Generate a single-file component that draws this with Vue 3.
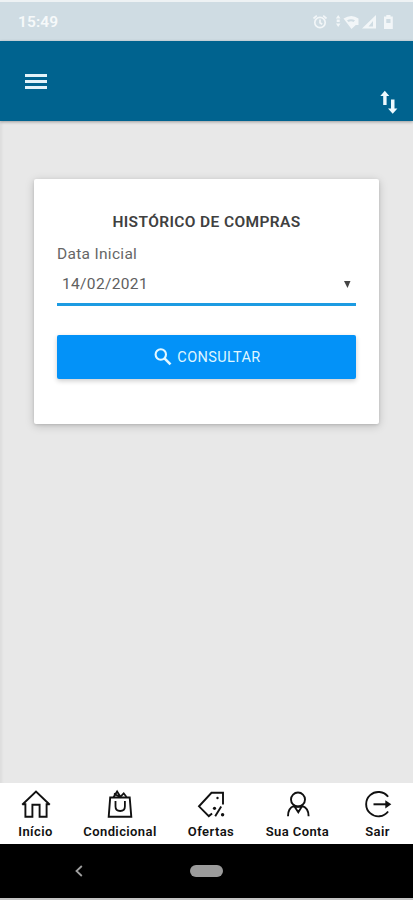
<script setup>
import { ref } from 'vue'

const startDate = ref('14/02/2021')
const tabs = [
  { id: 'home', label: 'Início' },
  { id: 'bag', label: 'Condicional' },
  { id: 'tag', label: 'Ofertas' },
  { id: 'user', label: 'Sua Conta' },
  { id: 'exit', label: 'Sair' },
]
</script>

<template>
  <div class="screen">
    <div class="status">
      <span class="clock">15:49</span>
      <svg class="indicators" width="86" height="20" viewBox="0 0 86 20">
        <g fill="none" stroke="#f2f6f8" stroke-width="1.7">
          <circle cx="8" cy="10.500" r="5.200" />
          <path d="M1.500 6.500 4.800 3.700M14.500 6.500 11.200 3.700M8 7.500v3.300l2.200 1.500" />
        </g>
        <g fill="#f2f6f8">
          <path d="m26.200 3 2.300 3.500h-4.600zM24.700 7.500h3v2.500h-3zM24 11.500h4.500l-2.300 3.500z" />
          <path fill-rule="evenodd" d="M31.500 6.500q8-5 15 0v6.500h-2.700l-4.300 4zm3.500 1.700 1.500 1.700q2.500-1.500 5 0l1.500-1.700q-4-2-8 0z" />
          <path fill-rule="evenodd" d="M64 3v13.500H50zM61 9l-4.500 5.500H61z" />
          <path fill-rule="evenodd" d="M72 4.500h2.300V3h4.200v1.500h2.300v12.500H72zM74.300 7v4h4.200V7z" />
        </g>
      </svg>
    </div>

    <header class="header">
      <button class="menu" aria-label="Menu"><i /><i /><i /></button>
      <svg class="swap" width="18" height="24" viewBox="0 0 18 24" fill="#eefaff">
        <path d="M4.800.8 9.300 6H6.600v9H3.200V6H.3zM12.700 23.700l4.700-5.300h-2.900v-9h-3.500v9H8z" />
      </svg>
    </header>

    <main class="content">
      <section class="card">
        <h1 class="title">HISTÓRICO DE COMPRAS</h1>
        <label class="label">Data Inicial</label>
        <div class="field">
          <span class="date">{{ startDate }}</span>
          <svg class="caret" width="7" height="7" viewBox="0 0 7 7"><path d="M0 0h6.500L3.500 7z" fill="#444" /></svg>
        </div>
        <button class="submit">
          <svg width="18" height="18" viewBox="0 0 18 18" fill="none" stroke="#e3f7ff">
            <circle cx="6.800" cy="6.500" r="5.200" stroke-width="2.100" />
            <path d="m10.500 10.300 6 6" stroke-width="2.600" />
          </svg>
          <span class="submit-text">CONSULTAR</span>
        </button>
      </section>
    </main>

    <nav class="tabs">
      <a v-for="tab in tabs" :key="tab.id" class="tab">
        <svg width="30" height="30" viewBox="0 0 30 30" fill="none" stroke="#111" stroke-width="1.9">
          <g v-if="tab.id === 'home'">
            <path d="M1.200 15.700 15 2.500l13.800 13.200M1.500 15.200h2.900v12.600h7v-12h7.200v12h7V15.200h2.900" />
          </g>
          <g v-else-if="tab.id === 'bag'">
            <path d="M5.200 8.500h19.500l1.600 19.300H3.700z" stroke-width="1.900" />
            <path d="M10.500 12v5.500q0 4.500 4.700 4.500t4.700-4.500V12M8.500 8.300l3.600-5.800 3.300 5.300 3.300-3.500 2.800 3.700M9 4.500l6.200 3.800" stroke-width="1.800" />
          </g>
          <g v-else-if="tab.id === 'tag'">
            <path d="M27 15.500V3.800H15.500L3 17.300l9.800 9.800 3.300-2.700" />
            <path d="m25.200 17.500-6 9.700" />
            <g fill="#111" stroke="none">
              <circle cx="21.500" cy="9" r="1.200" />
              <circle cx="18.500" cy="19.300" r="1.600" />
              <circle cx="26.600" cy="25.700" r="1.700" />
            </g>
          </g>
          <g v-else-if="tab.id === 'user'">
            <circle cx="15" cy="10.500" r="7" />
            <path d="M5 27.300q-.2-8.200 6-10.500l4.300 6.500 4-6.500q6.500 2.300 6.300 10.500M11 16.800q4.100 2 8.300 0" />
          </g>
          <g v-else>
            <path d="M25.100 7.800A12.200 12.200 0 1 0 25.100 22.500" />
            <path d="M10.500 15.300h15" stroke-width="2" />
            <path d="m22.300 11.200 6 4.100-6 4.100z" fill="#111" stroke="none" />
          </g>
        </svg>
        <span class="tab-label">{{ tab.label }}</span>
      </a>
    </nav>

    <footer class="system">
      <svg class="back" width="8" height="12" viewBox="0 0 8 12" fill="none" stroke="#a0a0a0" stroke-width="1.800"><path d="M6.800 1 1.500 6l5.300 5" /></svg>
      <span class="pill" />
    </footer>
  </div>
</template>

<style>
body {
  margin: 0;
}
</style>

<style scoped>
.screen {
  box-sizing: border-box;
  display: flex;
  flex-direction: column;
  width: 413px;
  height: 900px;
  overflow: hidden;
  border-top: 2px solid #eef2f4;
  border-bottom: 2px solid #c4c4c4;
  background: #e8e8e8;
  font-family: Roboto, sans-serif;
}
.status {
  box-sizing: border-box;
  display: flex;
  flex: none;
  align-items: center;
  justify-content: space-between;
  height: 39px;
  padding: 0 15px 0 18px;
  background: #cfdce3;
  color: #f6f9fa;
}
.clock {
  font-size: 15.5px;
  font-weight: 600;
  letter-spacing: 0.1px;
  line-height: 20px;
}
.indicators {
  flex: none;
}
.header {
  box-sizing: border-box;
  display: flex;
  flex: none;
  align-items: flex-start;
  justify-content: space-between;
  height: 80px;
  padding: 32px 15px 0 25px;
  background: #00638f;
  box-shadow: 0 1px 3px #0005;
}
.menu {
  display: grid;
  gap: 3px;
  width: 22px;
  margin-top: 1px;
  padding: 0;
  border: 0;
  background: none;
}
.menu i {
  height: 3px;
  background: #e3f3fa;
}
.swap {
  margin-top: 17px;
}
.content {
  flex: 1;
  padding: 58px 34px 0;
  box-shadow: inset 4px 0 3px -2px #0000000d;
}
.card {
  box-sizing: border-box;
  display: flex;
  flex-direction: column;
  height: 245px;
  padding: 33px 23px 0;
  border-radius: 2px;
  background: #fff;
  box-shadow: 0 2px 10px #0000002e, 0 1px 3px #0000001f;
}
.title {
  margin: 0;
  color: #404040;
  font-size: 15.5px;
  font-weight: 600;
  letter-spacing: 0.38px;
  line-height: 20px;
  text-align: center;
  white-space: nowrap;
}
.label {
  margin-top: 12px;
  color: #666;
  font-size: 15.5px;
  letter-spacing: 0.3px;
  line-height: 20px;
}
.field {
  box-sizing: border-box;
  display: flex;
  align-items: center;
  justify-content: space-between;
  height: 42px;
  padding: 0 5px 0;
  border-bottom: 3px solid #1c9be2;
  color: #606060;
}
.date {
  font-size: 15.5px;
  letter-spacing: 0.35px;
}
.caret {
  margin-top: 2px;
}
.submit {
  display: flex;
  align-items: center;
  justify-content: center;
  gap: 5px;
  height: 44px;
  margin-top: 29px;
  padding: 0 0 0 2px;
  border: 0;
  border-radius: 2px;
  background: #0392f8;
  box-shadow: 0 2px 5px #0003;
  color: #dff6ff;
  font-family: inherit;
  font-size: 14.5px;
  letter-spacing: 0.35px;
}
.tabs {
  box-sizing: border-box;
  display: grid;
  flex: none;
  grid-template-columns: 71px 98px 84px 89px 71px;
  height: 61px;
  padding-top: 6px;
  background: #fff;
}
.tab {
  display: flex;
  flex-direction: column;
  align-items: center;
}
.tab-label {
  margin-top: 5px;
  color: #111;
  font-size: 13px;
  font-weight: 600;
  letter-spacing: 0.4px;
  line-height: 16px;
  white-space: nowrap;
}
.system {
  box-sizing: border-box;
  display: flex;
  flex: none;
  align-items: center;
  gap: 107px;
  height: 54px;
  padding-left: 75px;
  background: #000;
}
.pill {
  width: 33px;
  height: 12px;
  border-radius: 6px;
  background: #9b9b9b;
}
</style>
